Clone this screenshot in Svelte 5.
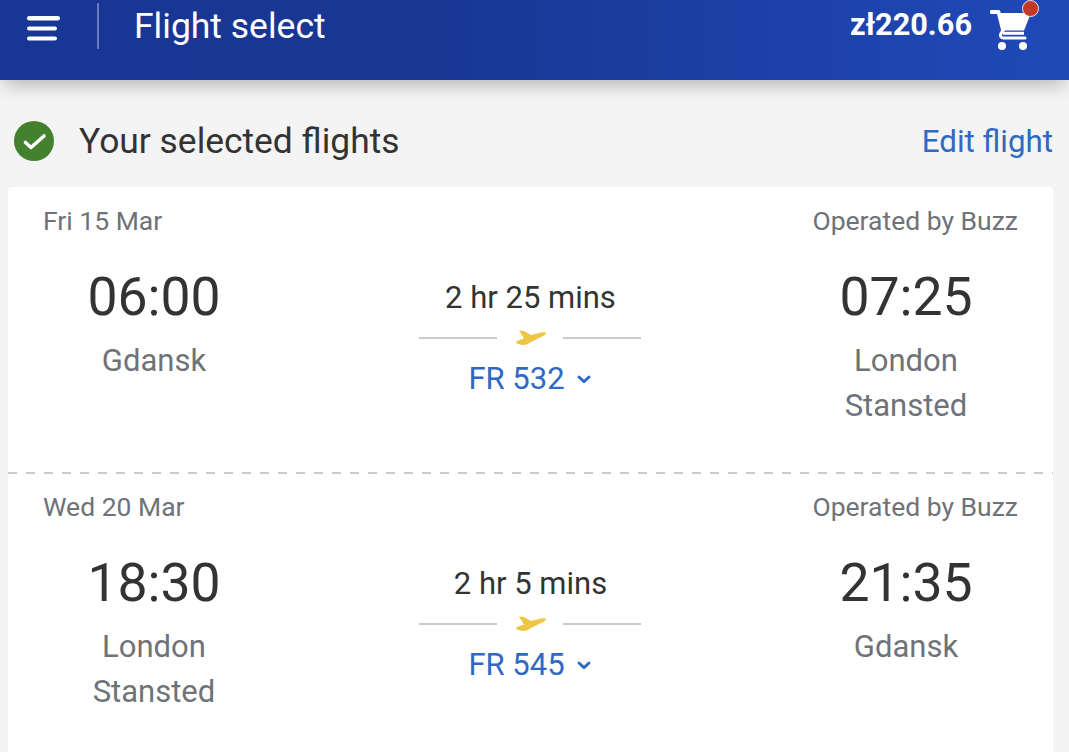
<script lang="ts">
  const flights = [
    {
      date: "Fri 15 Mar",
      dep: "06:00",
      from: ["Gdansk"],
      duration: "2 hr 25 mins",
      code: "FR 532",
      arr: "07:25",
      to: ["London", "Stansted"]
    },
    {
      date: "Wed 20 Mar",
      dep: "18:30",
      from: ["London", "Stansted"],
      duration: "2 hr 5 mins",
      code: "FR 545",
      arr: "21:35",
      to: ["Gdansk"]
    }
  ];
</script>

<div class="page">
  <header class="topbar">
    <button class="menu" aria-label="Menu">
      <svg width="34" height="26" viewBox="0 0 34 26">
        <rect x="1" y="1" width="33" height="4.400" rx="2.200" fill="#fff" />
        <rect x="1" y="11.500" width="30" height="4" rx="2" fill="#fff" />
        <rect x="1" y="21.500" width="30" height="4" rx="2" fill="#fff" />
      </svg>
    </button>
    <span class="divider"></span>
    <h1>Flight select</h1>
    <span class="price">zł220.66</span>
    <span class="cart">
      <svg width="44" height="46" viewBox="0 0 44 46">
        <path d="M1.500 6h7l4.500 18" fill="none" stroke="#fff" stroke-width="3.800" stroke-linecap="round" stroke-linejoin="round" />
        <path d="M9 7h32l-7 17.500H13z" fill="#fff" />
        <path d="M13 24l-2 3.500c-1.200 2.500 0 4.500 2.500 4.500H35" fill="none" stroke="#fff" stroke-width="3" stroke-linecap="round" />
        <path d="M13 27.300h21" stroke="#fff" stroke-width="3" />
        <circle cx="12" cy="40" r="4" fill="#fff" />
        <circle cx="33" cy="40" r="4" fill="#fff" />
      </svg>
      <span class="dot"></span>
    </span>
  </header>

  <section class="heading">
    <svg class="check" width="40" height="40" viewBox="0 0 40 40">
      <circle cx="20" cy="20" r="20" fill="#43812f" />
      <path d="M11.500 21.500l5.500 5 13-11.500" fill="none" stroke="#fff" stroke-width="3.600" stroke-linecap="round" stroke-linejoin="round" />
    </svg>
    <h2>Your selected flights</h2>
    <a href="#edit">Edit flight</a>
  </section>

  <main class="card">
    {#each flights as f, i}
      <article class="flight" class:dashed={i > 0}>
        <div class="meta">
          <span>{f.date}</span>
          <span>Operated by Buzz</span>
        </div>
        <div class="times">
          <div class="end">
            <div class="time">{f.dep}</div>
            {#each f.from as line}
              <div class="place">{line}</div>
            {/each}
          </div>
          <div class="mid">
            <div class="duration">{f.duration}</div>
            <div class="route">
              <span class="line"></span>
              <svg width="30" height="16" viewBox="0 0 30 16">
                <path d="M3 .5L8 1l7 4 10-2.500C28 1.800 30 2.200 30 3.200c0 1.400-2 2.400-4.500 3.500L15 12c-3 2-6 3.500-9 3l-5-1.500c-1-.5-1-2 0-2.500l2.500-1L8 8.500z" fill="#eec643" />
              </svg>
              <span class="line"></span>
            </div>
            <div class="code">
              <span>{f.code}</span>
              <svg width="14" height="9" viewBox="0 0 14 9">
                <path d="M2 2l5 4.600L12 2" fill="none" stroke="#2f69c4" stroke-width="2.800" stroke-linecap="round" stroke-linejoin="round" />
              </svg>
            </div>
          </div>
          <div class="end">
            <div class="time">{f.arr}</div>
            {#each f.to as line}
              <div class="place">{line}</div>
            {/each}
          </div>
        </div>
      </article>
    {/each}
  </main>
</div>

<style>
  :global(body) {
    margin: 0;
    background: #f4f4f4;
    overflow: hidden;
  }

  .page {
    height: 752px;
    overflow: hidden;
    font-family: Roboto, "Liberation Sans", sans-serif;
    color: #333;
  }

  .topbar {
    height: 80px;
    box-sizing: border-box;
    padding: 3px 35px 0 26px;
    display: flex;
    align-items: flex-start;
    background: linear-gradient(90deg, #183693 0%, #183793 40%, #2049b8 100%);
    box-shadow: 0 8px 18px -4px rgba(0, 0, 0, 0.28);
    color: #fff;
    position: relative;
  }

  .menu {
    width: 34px;
    height: 26px;
    margin-top: 12px;
    padding: 0;
    border: 0;
    background: none;
    display: block;
  }

  .menu svg {
    display: block;
  }

  .divider {
    width: 2px;
    height: 46px;
    margin-left: 37px;
    background: rgba(255, 255, 255, 0.35);
  }

  h1 {
    margin: 1px 0 0 35px;
    font-size: 35.500px;
    font-weight: 400;
    line-height: 44px;
    flex: 1;
  }

  .price {
    font-size: 30.700px;
    font-weight: 700;
    line-height: 44px;
  }

  .cart {
    position: relative;
    width: 44px;
    height: 46px;
    margin: 3px 0 0 18px;
  }

  .cart svg {
    display: block;
  }

  .dot {
    position: absolute;
    top: -6px;
    right: -5px;
    width: 17px;
    height: 17px;
    box-sizing: border-box;
    border-radius: 50%;
    background: #c23a25;
    border: 1px solid #e8e8f0;
  }

  .heading {
    display: flex;
    align-items: center;
    height: 107px;
    box-sizing: border-box;
    padding: 15px 16px 0 14px;
  }

  h2 {
    margin: 0 0 0 25px;
    font-size: 35.400px;
    font-weight: 400;
    color: #333;
    flex: 1;
  }

  .heading a {
    color: #2f69c4;
    font-size: 31.300px;
    text-decoration: none;
  }

  .card {
    margin: 0 16px 0 8px;
    background: #fff;
    border-radius: 4px;
  }

  .flight {
    height: 285px;
    box-sizing: border-box;
    padding: 20px 35px 0;
  }

  .flight.dashed {
    height: 300px;
    padding-top: 21px;
    background: repeating-linear-gradient(90deg, #c9cbce 0 9px, transparent 9px 18px) top left / 100% 2px no-repeat;
  }

  .meta {
    display: flex;
    justify-content: space-between;
    font-size: 26.500px;
    line-height: 28px;
    color: #6f7278;
  }

  .times {
    display: grid;
    grid-template-columns: 222px 1fr 222px;
    margin-top: 30px;
  }

  .end {
    text-align: center;
  }

  .end:last-child {
    padding-right: 2px;
  }

  .time {
    font-size: 53.500px;
    line-height: 64px;
    margin-bottom: 10px;
  }

  .place {
    font-size: 31px;
    line-height: 44.500px;
    color: #6f7278;
  }

  .mid {
    text-align: center;
    padding-top: 11px;
  }

  .duration {
    font-size: 31px;
    line-height: 44px;
  }

  .route {
    display: flex;
    align-items: center;
    justify-content: center;
    gap: 18px;
    margin-top: 10px;
    transform: translateX(-1px);
  }

  .route svg {
    margin: 0 -1px 0 1px;
  }

  .line {
    width: 78px;
    height: 2px;
    background: #c9cbce;
  }

  .code {
    display: flex;
    align-items: center;
    justify-content: center;
    gap: 12px;
    padding-right: 2px;
    font-size: 31px;
    line-height: 44px;
    color: #2f69c4;
    margin-top: 11px;
  }
</style>
